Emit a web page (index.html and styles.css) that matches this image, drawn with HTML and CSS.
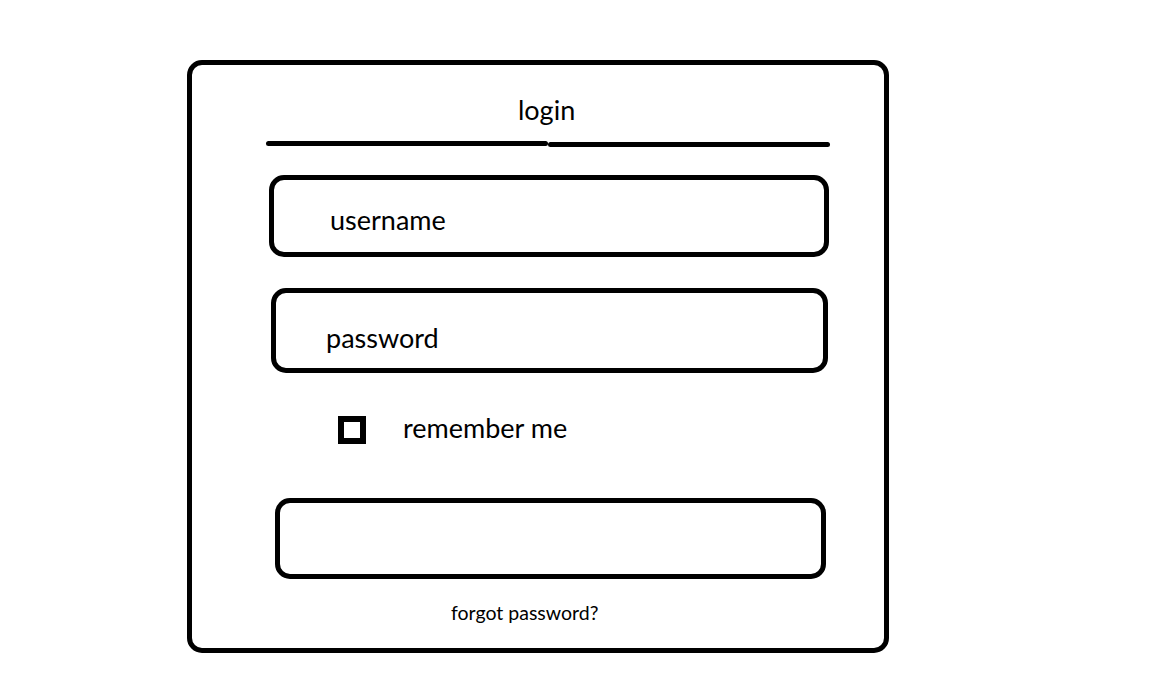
FILE: index.html
```html
<!DOCTYPE HTML>
<html lang="en">
  <head>
    <title>login</title>
    <meta charset="utf-8">
    <link rel="stylesheet" href="styles.css">
  </head>
  <body>

  <div class="card">
    <div class="title">login</div>

    <div class="rule">
      <span class="rule-left"></span>
      <span class="rule-right"></span>
    </div>

    <div class="field field-user">username</div>
    <div class="field field-pass">password</div>

    <div class="remember">
      <span class="check"></span>
      <span class="remember-text">remember me</span>
    </div>

    <div class="button"></div>

    <div class="forgot">forgot password?</div>
  </div>

  </body>
</html>
```

FILE: styles.css
```css
html {
  height: 100%;
}
body {
  margin: 0;
  padding: 60px 0 0 187px;
  background: #ffffff;
  color: #000000;
  font-family: Lato, "Open Sans", sans-serif;
}

.card {
  box-sizing: border-box;
  width: 702px;
  height: 593px;
  border: 5px solid #000;
  border-radius: 15px;
  display: flex;
  flex-direction: column;
  align-items: flex-start;
}

.title {
  margin: 29px 0 0 326px;
  font-size: 27px;
  line-height: 32px;
}

.rule {
  display: flex;
  margin: 15px 0 0 74px;
  width: 564px;
  height: 6px;
}
.rule-left,
.rule-right {
  display: block;
  height: 5px;
  background: #000;
  border-radius: 2.5px;
}
.rule-left {
  width: 282px;
}
.rule-right {
  width: 282px;
  margin-top: 1px;
}

.field {
  box-sizing: border-box;
  border: 5px solid #000;
  border-radius: 15px;
  font-size: 27px;
  line-height: 32px;
}
.field-user {
  margin: 28px 0 0 77px;
  width: 560px;
  height: 82px;
  padding: 24px 0 0 56px;
}
.field-pass {
  margin: 31px 0 0 79px;
  width: 557px;
  height: 85px;
  padding: 29px 0 0 50px;
}

.remember {
  display: flex;
  align-items: flex-start;
  margin: 39px 0 0 146px;
  gap: 37px;
}
.check {
  box-sizing: border-box;
  display: block;
  margin-top: 4px;
  width: 28px;
  height: 28px;
  border: 6px solid #000;
}
.remember-text {
  font-size: 27px;
  line-height: 32px;
}

.button {
  box-sizing: border-box;
  margin: 54px 0 0 83px;
  width: 551px;
  height: 81px;
  border: 5px solid #000;
  border-radius: 15px;
}

.forgot {
  margin: 22px 0 0 259px;
  font-size: 19.5px;
  line-height: 24px;
}
```
